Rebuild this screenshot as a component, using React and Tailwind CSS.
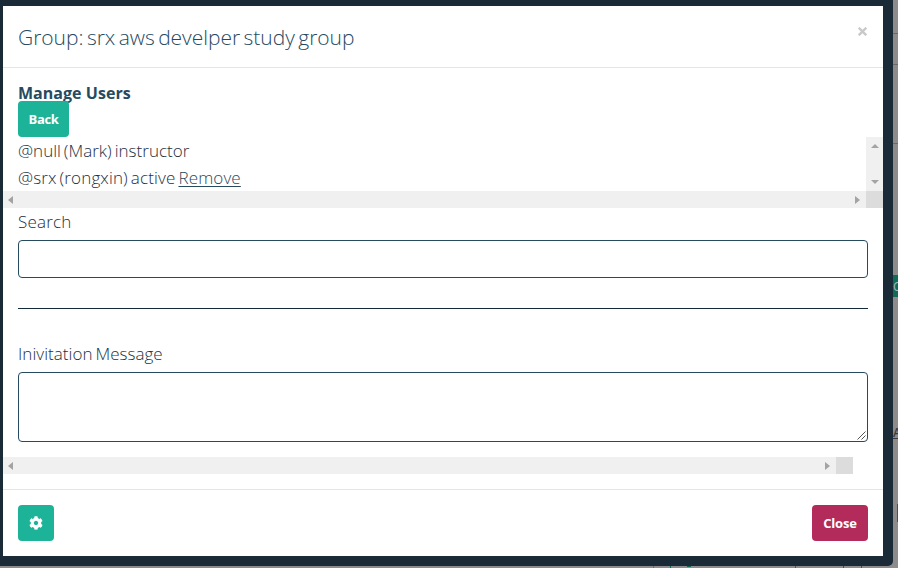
import React from "react";
import { FaCog } from "react-icons/fa";

function Arrow({ dir }) {
  const points = {
    left: "5,0 5,8 0,4",
    right: "0,0 0,8 5,4",
    up: "0,4 8,4 4,0",
    down: "0,0 8,0 4,4",
  }[dir];
  const vertical = dir === "up" || dir === "down";
  return (
    <svg width={vertical ? 8 : 5} height={vertical ? 4 : 8} className="block shrink-0">
      <polygon points={points} fill="#a3a3a3" />
    </svg>
  );
}

function HorizontalScrollbar() {
  return (
    <div className="flex h-[17px] grow items-center justify-between bg-[#f0f0f0] pl-[5px] pr-[6px]">
      <Arrow dir="left" />
      <Arrow dir="right" />
    </div>
  );
}

function Backdrop() {
  return (
    <>
      <div className="absolute left-[893px] top-[33px] h-px w-[5px] bg-[#6c6b6b]" />
      <div className="absolute left-[893px] top-[64px] h-px w-[5px] bg-[#6c6b6b]" />
      <div className="absolute left-[893px] top-[143px] h-px w-[5px] bg-[#6c6b6b]" />
      <div className="absolute left-[893px] top-[275px] h-[22px] w-[5px] overflow-hidden bg-[#106b59] text-[12px] leading-[23px] text-[#a9b8b4]">
        C
      </div>
      <div className="absolute left-[893px] top-[424px] h-[18px] w-[5px] overflow-hidden text-[12px] font-semibold leading-[18px] text-[#3e3a3a] underline">
        A
      </div>
      <div className="absolute left-[897px] top-[504px] h-[18px] w-px bg-[#106b59]" />
      <div className="absolute left-[653px] top-[566px] h-[2px] w-px bg-[#6c6b6b]" />
      <div className="absolute left-[670px] top-[566px] h-[2px] w-px bg-[#0e6655]" />
      <div className="absolute left-[687px] top-[566px] h-px w-[4px] bg-[#0e6655]" />
      <div className="absolute left-[795px] top-[566px] h-[2px] w-px bg-[#4d5a3d]" />
      <div className="absolute left-[843px] top-[566px] h-[2px] w-px bg-[#0e6655]" />
      <div className="absolute left-[861px] top-[566px] h-[2px] w-px bg-[#0e6655]" />
    </>
  );
}

export default function App() {
  return (
    <div className="relative h-[568px] w-[898px] overflow-hidden bg-[#8d8b8b] font-['Open_Sans',sans-serif] text-[#1b2f3e]">
      <Backdrop />
      <div className="relative h-[566px] w-[893px] rounded-br-[5px] bg-[#1a2b37] pl-[3px] pt-1.5">
        <div className="flex h-[550px] w-[880px] flex-col bg-white">
          <header className="flex h-[62px] shrink-0 justify-between border-b border-[#e3e5e7] px-[15px]">
            <h1 className="text-[21px] font-[350] leading-[63px] tracking-[-0.02px] text-[#264a60] [word-spacing:-2px]">
              Group: srx aws develper study group
            </h1>
            <button aria-label="Dismiss" className="mr-[1px] mt-[21px] h-[9px] w-[9px]">
              <svg width="9" height="9" viewBox="0 0 9 9" className="block">
                <path d="M0.7 0.7 8.3 8.3M8.3 0.7 0.7 8.3" stroke="#c9c9c9" strokeWidth="2.3" />
              </svg>
            </button>
          </header>

          <div className="flex h-[421px] shrink-0 flex-col">
            <div className="h-[33px] pl-[15px] pt-[14px]">
              <strong className="block text-[16px] font-bold leading-[22px] tracking-[0.03px] text-[#264a60]">
                Manage Users
              </strong>
            </div>
            <button className="relative ml-[15px] h-9 w-[51px] shrink-0 rounded-[4px] bg-[#1cb398] pt-px text-[13px] font-bold tracking-[-0.35px] text-white">
              Back
            </button>
            <div className="flex h-[54px] shrink-0 justify-between">
              <ul className="pl-[15px] text-[17px] font-[350] leading-[27px] [word-spacing:-1.5px]">
                <li className="h-[27px] tracking-[0.02px]">@null (Mark) instructor</li>
                <li className="h-[27px] tracking-[0.13px]">
                  @srx (rongxin) active{" "}
                  <a className="text-[#264a60] underline underline-offset-2">Remove</a>
                </li>
              </ul>
              <div className="flex w-[17px] flex-col items-center justify-between bg-[#f0f0f0] pb-[7px] pt-[7px]">
                <Arrow dir="up" />
                <Arrow dir="down" />
              </div>
            </div>
            <div className="flex h-[17px] shrink-0">
              <HorizontalScrollbar />
              <div className="w-[17px] bg-[#dcdcdc]" />
            </div>

            <div className="flex flex-col px-[15px]">
              <label className="h-8 text-[17px] font-[350] leading-[28px] tracking-[0.2px]">Search</label>
              <input className="h-[38px] rounded-[4px] border border-[#264a60] bg-white px-3 outline-none" />
              <hr className="mt-[30px] border-t border-[#132a3a]" />
              <label className="mt-[31px] h-8 text-[17px] font-[350] leading-[28px] tracking-[0.04px] [word-spacing:-1.5px]">
                Inivitation Message
              </label>
              <div className="flex h-[70px] items-end justify-end rounded-[4px] border border-[#264a60] pb-px pr-px">
                <svg width="9" height="9" viewBox="0 0 9 9" className="block">
                  <path d="M0.5 8.5 8.5 0.5M4.5 8.5 8.5 4.5" stroke="#555" strokeWidth="1" />
                </svg>
              </div>
            </div>
            <div className="mt-[15px] flex h-[17px] w-[850px] shrink-0">
              <HorizontalScrollbar />
              <div className="w-[17px] bg-[#dcdcdc]" />
            </div>
          </div>

          <footer className="flex h-[67px] shrink-0 items-start justify-between border-t border-[#e3e5e7] px-[15px] pt-[15px]">
            <button aria-label="Settings" className="flex h-9 w-9 items-center justify-center rounded-[4px] bg-[#1cb398] text-white">
              <FaCog size={14} />
            </button>
            <button className="h-9 w-14 rounded-[4px] bg-[#b32b5b] pt-0.5 text-[13px] font-bold tracking-[-0.2px] text-white">
              Close
            </button>
          </footer>
        </div>
      </div>
    </div>
  );
}
